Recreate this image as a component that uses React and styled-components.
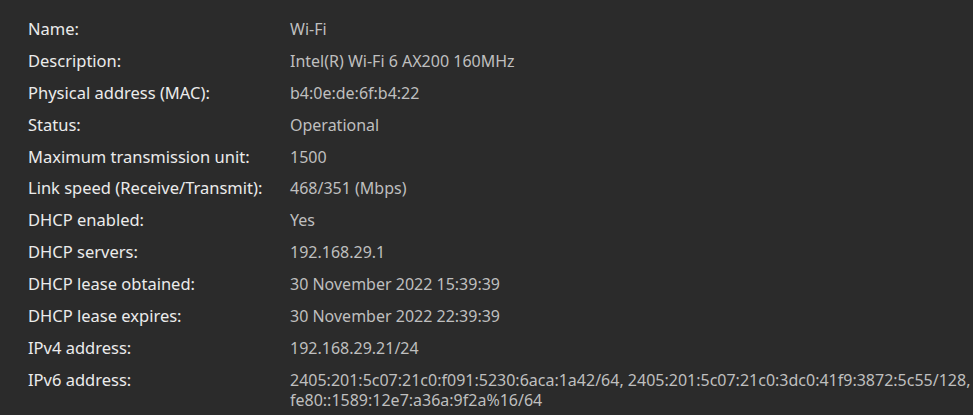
import React from 'react';
import styled, { createGlobalStyle } from 'styled-components';

const GlobalStyle = createGlobalStyle`
  * {
    margin: 0;
    padding: 0;
    box-sizing: border-box;
  }
  body {
    background-color: #2b2b2b;
    font-family: "Noto Sans", "Open Sans", Arial, sans-serif;
  }
`;

const Panel = styled.div`
  width: 973px;
  height: 415px;
  padding: 19px 0 0 28px;
  background-color: #2b2b2b;
  overflow: hidden;
`;

const Row = styled.div`
  display: grid;
  grid-template-columns: 262px 1fr;
  line-height: 20px;
  margin-bottom: 11.9px;
`;

const Label = styled.div`
  color: #ebebeb;
  font-size: 16.5px;
`;

const Value = styled.div`
  color: #bfbfbf;
  font-size: 16px;
  white-space: nowrap;
`;

const rows = [
  ['Name:', ['Wi-Fi']],
  ['Description:', ['Intel(R) Wi-Fi 6 AX200 160MHz']],
  ['Physical address (MAC):', ['b4:0e:de:6f:b4:22']],
  ['Status:', ['Operational']],
  ['Maximum transmission unit:', ['1500']],
  ['Link speed (Receive/Transmit):', ['468/351 (Mbps)']],
  ['DHCP enabled:', ['Yes']],
  ['DHCP servers:', ['192.168.29.1']],
  ['DHCP lease obtained:', ['30 November 2022 15:39:39']],
  ['DHCP lease expires:', ['30 November 2022 22:39:39']],
  ['IPv4 address:', ['192.168.29.21/24']],
  [
    'IPv6 address:',
    [
      '2405:201:5c07:21c0:f091:5230:6aca:1a42/64, 2405:201:5c07:21c0:3dc0:41f9:3872:5c55/128,',
      'fe80::1589:12e7:a36a:9f2a%16/64',
    ],
  ],
];

export default function App() {
  return (
    <>
      <GlobalStyle />
      <Panel>
        {rows.map(([label, lines]) => (
          <Row key={label}>
            <Label>{label}</Label>
            <Value>
              {lines.map((line) => (
                <div key={line}>{line}</div>
              ))}
            </Value>
          </Row>
        ))}
      </Panel>
    </>
  );
}
